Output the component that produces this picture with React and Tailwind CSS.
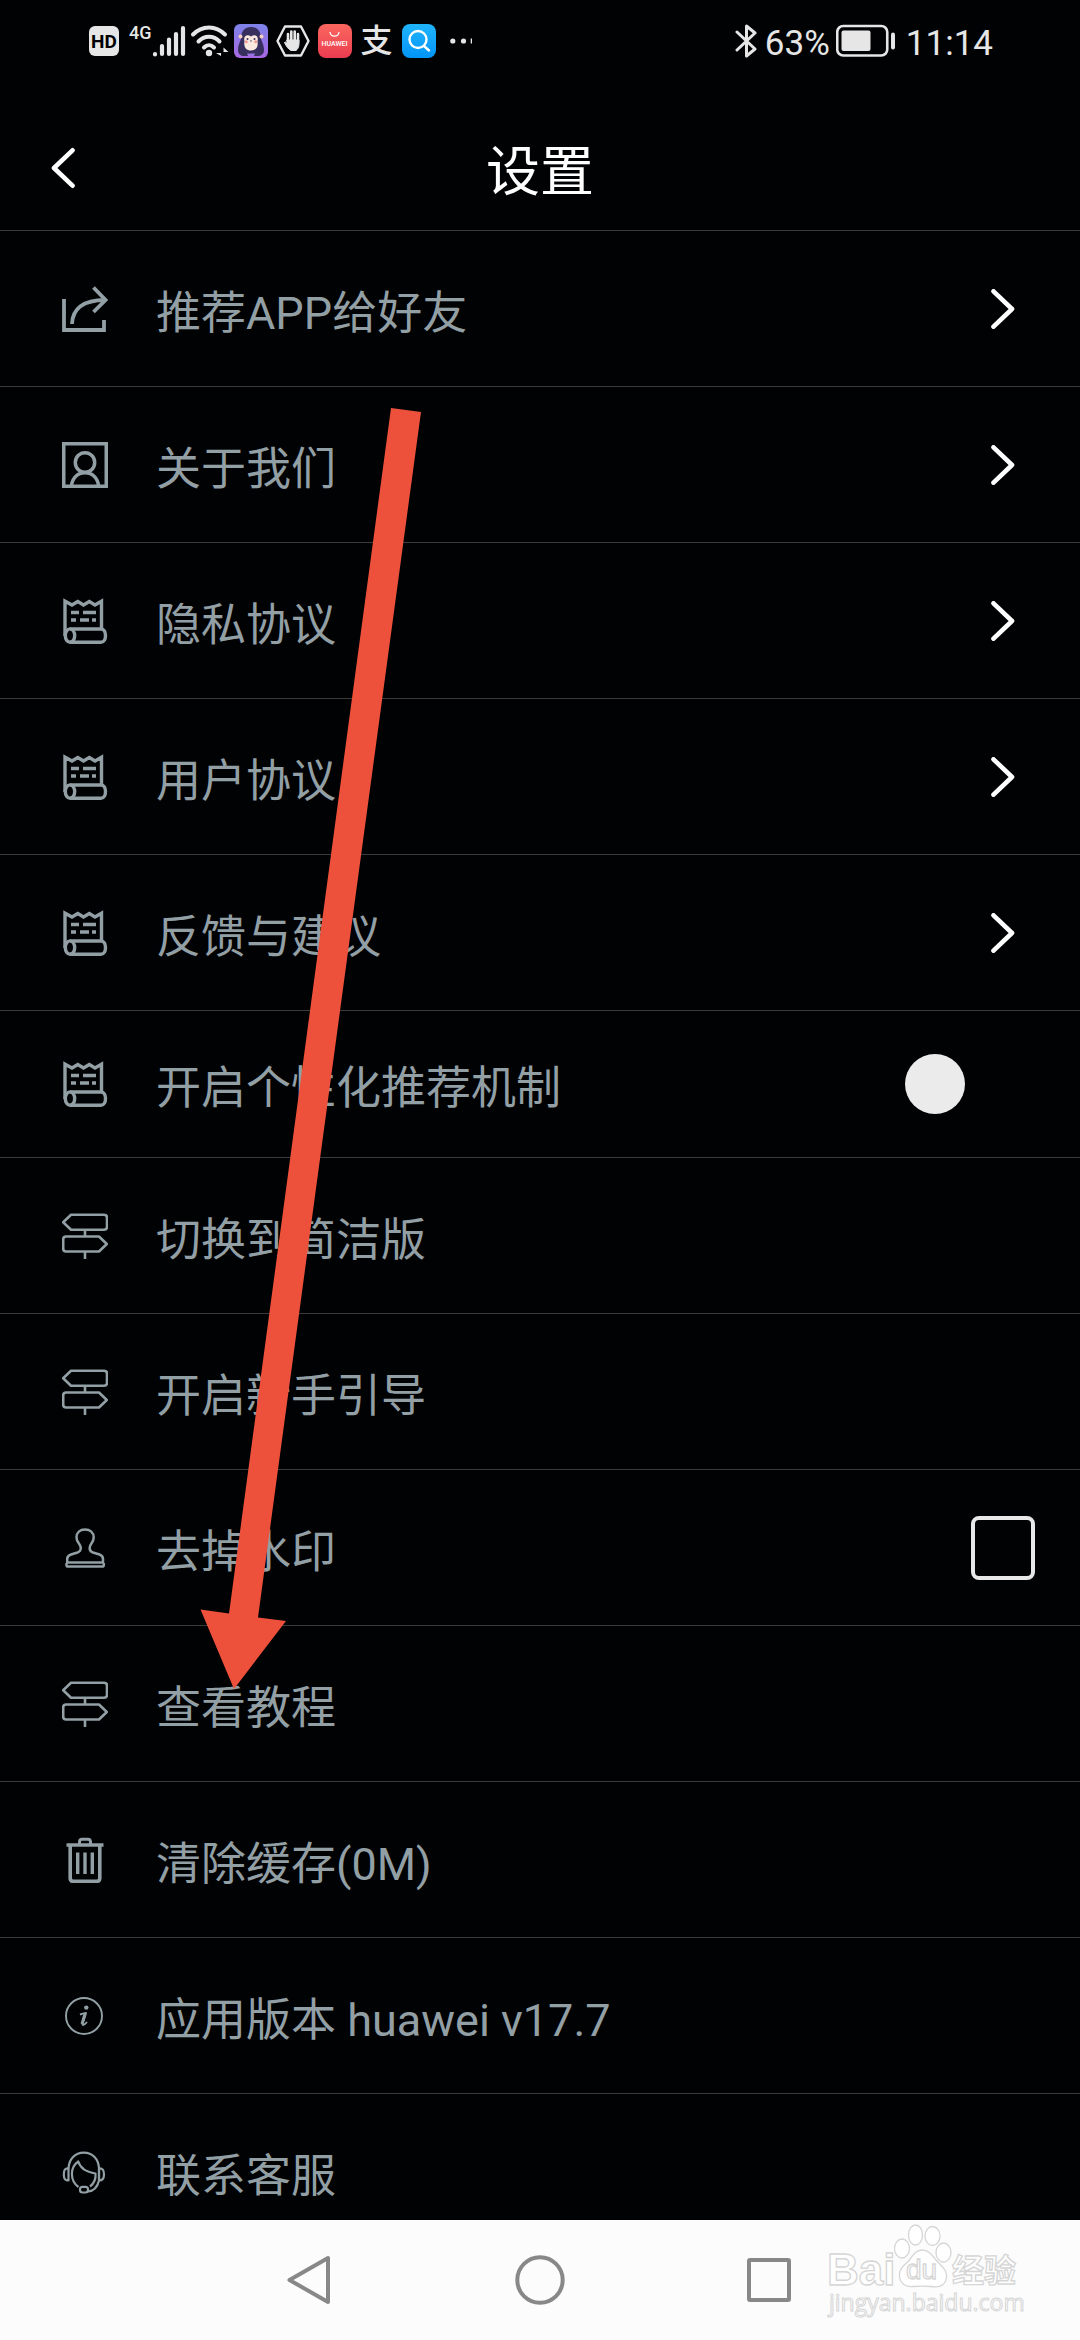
import React, { useState } from 'react';

const ShareIcon = () => (
    <svg className="size-[46px]" viewBox="0 0 46 46" fill="none" stroke="currentColor" strokeWidth={3.8}>
        <path d="M2 13V44H42V34" />
        <path d="M10 38C10.500 23 21 14 43 14" />
        <path d="M31.500 1.500L43.500 14L31.500 26" />
    </svg>
);

const UserIcon = () => (
    <svg className="size-[46px]" viewBox="0 0 46 46" fill="none" stroke="currentColor" strokeWidth={3.5}>
        <rect x="1.750" y="1.750" width="42.500" height="42.500" />
        <ellipse cx="23" cy="20.500" rx="9.700" ry="9.800" />
        <path d="M9.500 44C10 36 15.500 30.800 23 30.800S36 36 36.500 44" />
    </svg>
);

const ScrollIcon = () => (
    <svg className="size-[46px]" viewBox="0 0 46 46" fill="none" stroke="currentColor" strokeWidth={3.4}>
        <path d="M3 38V3.200L10 7L15.800 3.500L21.500 7L27.300 3.500L33 7L39.500 3.200V31" />
        <path d="M9 14.500H17M21 14.500H34M9 22H14M18 22H27M30 22H34" />
        <path d="M8 31H39C42 31 43.500 34 43.500 37.500S42 44.300 39 44.300H8" />
        <ellipse cx="8" cy="37.600" rx="4.700" ry="6.700" />
    </svg>
);

const SignpostIcon = () => (
    <svg className="size-[46px]" viewBox="0 0 46 46" fill="none" stroke="currentColor" strokeWidth={2.6} strokeLinejoin="round">
        <path d="M9 1.700H42C44 1.700 45 2.700 45 4.500V14C45 15.800 44 16.700 42 16.700H9L1.200 9.200Z" />
        <path d="M37 23.500H4C2 23.500 1.200 24.500 1.200 26.300V35.500C1.200 37.300 2 38.500 4 38.500H37L44.800 31Z" />
        <path d="M23 16.700V23.500M23 38.500V46" />
    </svg>
);

const StampIcon = () => (
    <svg className="size-[46px]" viewBox="0 0 46 46" fill="none" stroke="currentColor" strokeWidth={2.5}>
        <path d="M5.200 37.500V34C5.200 31.500 6.500 30.300 9 29.500L15.500 27.500C18.500 26.500 19 25 18.700 22.500C18.500 18.500 14.500 17.500 14.500 12.500C14.500 7.500 18 4.500 23 4.500S31.700 7.500 31.700 12.500C31.700 17.500 28 18.500 27.700 22.500C27.500 25 28 26.500 31 27.500L37.500 29.500C40 30.300 41 31.500 41 34V37.500Z" />
        <path d="M4.500 38V40C4.500 41 5.200 41.600 6.200 41.600H40C41 41.600 41.800 41 41.800 40V38" />
    </svg>
);

const TrashIcon = () => (
    <svg className="size-[46px]" viewBox="0 0 46 46" fill="none" stroke="currentColor" strokeWidth={3.6}>
        <path d="M4.500 8H41.500" />
        <path d="M17.500 7.500V5C17.500 3 18.500 2.200 20 2.200H26C27.500 2.200 28.500 3 28.500 5V7.500" strokeWidth={3} />
        <path d="M8.200 8V41C8.200 43.200 9.500 44.400 11.500 44.400H34.500C36.500 44.400 37.800 43.200 37.800 41V8" />
        <path d="M15.700 15.500V37M23 15.500V37M30.300 15.500V37" strokeWidth={3.4} />
    </svg>
);

const InfoIcon = () => (
    <svg className="size-[46px]" viewBox="0 0 46 46" fill="none" stroke="currentColor" strokeWidth={1.900}>
        <circle cx="22" cy="23" r="18" />
        <circle cx="24.300" cy="14.600" r="2.200" fill="currentColor" stroke="none" />
        <path d="M18 21.500C20 20.800 22 20.300 24 19.900L20.600 30.500C20 32.600 22 32.600 25 29" strokeLinejoin="round" />
        <path d="M23 21L20 31" strokeWidth={3} />
    </svg>
);

const SupportIcon = () => (
    <svg className="size-[46px]" viewBox="0 0 46 46" fill="none" stroke="currentColor" strokeWidth={2.2} strokeLinejoin="round">
        <path d="M6.500 19.500C7 10 13 3.700 21.800 3.700S36.600 10 37 19.500V31" />
        <path d="M6.500 19.500C3 19 1.800 21 1.800 25.500S3 31.500 6.500 31.500Z" />
        <path d="M37 19.500C40.500 19 42 21 42 25.500S40.500 31.500 37 31.500Z" />
        <path d="M16.500 38C8 32 7.500 18.500 16.300 12.500C18 18.500 24 23 33.500 24.500C34 30 32 34.500 28 37.500" />
        <path d="M37 31.500C35.500 38 31.500 42 26 42.500" />
        <rect x="18" y="37.800" width="8" height="5.700" rx="2.500" />
    </svg>
);

const Chevron = ({ back }) => (
    <svg
        className={back ? 'h-[42px] w-6 rotate-180' : 'h-10 w-6'}
        viewBox="0 0 24 40"
        fill="none"
        stroke="currentColor"
        strokeWidth={4.6}
        strokeLinecap="round"
        strokeLinejoin="round"
    >
        <path d="M2.500 2.300L21 20L2.500 37.700" />
    </svg>
);

const StatusBar = () => (
    <div className="flex h-[82px] shrink-0 items-center justify-between pl-[89px] pr-[87px] text-[#e6e6e6]">
        <div className="flex items-center">
            <span className="flex size-[30px] items-center justify-center rounded-md bg-[#e6e6e6] text-[19px] font-bold leading-none text-black">
                HD
            </span>
            <span className="ml-2.5 flex h-[34px] items-start text-[18px] font-medium leading-none">4G</span>
            <svg className="h-8 w-[34px]" viewBox="0 0 34 32" fill="none" stroke="currentColor" strokeWidth={4.2} strokeLinecap="round">
                <path d="M3 29V29.500M10 21V29M17 14.500V29M24 9V29M31 3V29" />
            </svg>
            <svg className="ml-1 h-8 w-10" viewBox="0 0 40 32" fill="none" stroke="currentColor" strokeWidth={4} strokeLinecap="round">
                <path d="M3 9.500C12 0 26 0 35 9.500M8.500 16.500C14.500 10.300 23.500 10.300 29.500 16.500M14 22.500C17 19.500 21 19.500 24 22.500" />
                <circle cx="19" cy="28" r="3.200" fill="currentColor" stroke="none" />
                <path d="M31 22.500V31L26 28H31ZM33.500 31V22.500L38.500 27H33.500Z" fill="currentColor" stroke="none" />
            </svg>
            <svg className="ml-1 size-[34px]" viewBox="0 0 34 34">
                <defs>
                    <linearGradient id="ape" x1="0" y1="0" x2="0" y2="1">
                        <stop offset="0" stopColor="#7c83ea" />
                        <stop offset="1" stopColor="#a867e2" />
                    </linearGradient>
                </defs>
                <rect width="34" height="34" rx="6" fill="url(#ape)" />
                <path d="M17 3C11 3 7.500 7 7.500 12C7.500 16 4 20 4 26C4 30 7 32 10 32H24C27 32 30 30 30 26C30 20 26.500 16 26.500 12C26.500 7 23 3 17 3Z" fill="#37305f" />
                <circle cx="6.500" cy="12.500" r="2" fill="#f3cdbd" />
                <circle cx="27.500" cy="12.500" r="2" fill="#f3cdbd" />
                <path d="M17 12.500C13 9.500 9 12.500 10.500 17C9.500 23 12 26.500 17 26.500S24.500 23 23.500 17C25 12.500 21 9.500 17 12.500Z" fill="#fbe9df" />
                <circle cx="13.500" cy="15" r="1" fill="#37305f" />
                <circle cx="20.500" cy="15" r="1" fill="#37305f" />
                <circle cx="12.300" cy="17.800" r="1.500" fill="#f39a91" />
                <circle cx="21.700" cy="17.800" r="1.500" fill="#f39a91" />
                <path d="M16 16.500H18L17 18Z" fill="#37305f" />
                <path d="M13 29.500H21L20 32H14Z" fill="#9a70e3" />
            </svg>
            <svg className="ml-2 size-[34px]" viewBox="0 0 34 34" fill="none" stroke="currentColor" strokeLinejoin="round" strokeLinecap="round">
                <path d="M9 2.500H25L32.500 17L25 31.500H9L1.500 17Z" strokeWidth={2.4} />
                <path d="M12 18V10M15.300 17V7.500M18.700 17V7.500M22 18V10" strokeWidth={2.6} />
                <path d="M11 16H23V20C23 23 21.500 25.500 20 26.500H15C12.500 25.500 10 22 8.500 18.500C9.500 17.500 10.500 18.500 11.500 20Z" fill="currentColor" strokeWidth={1} />
            </svg>
            <span className="ml-2 flex size-[34px] flex-col items-center justify-end gap-1 rounded-lg bg-linear-to-b from-[#fa665f] to-[#ea3b50] pb-2.5 text-white">
                <svg className="h-[5px] w-[11px]" viewBox="0 0 11 5" fill="none" stroke="currentColor" strokeWidth={1.200}>
                    <path d="M1 0C1.500 5.500 9.500 5.500 10 0" />
                </svg>
                <span className="text-[7px] font-medium leading-none">HUAWEI</span>
            </span>
            <span className="ml-2 w-[34px] text-center text-[32px] font-medium leading-none">支</span>
            <span className="ml-2 flex size-[34px] items-center justify-center rounded-lg bg-linear-to-b from-[#20b4fb] to-[#0295f8] text-white">
                <svg className="size-6" viewBox="0 0 24 24" fill="none" stroke="currentColor" strokeWidth={2.4} strokeLinecap="round">
                    <circle cx="11" cy="10.500" r="8.500" />
                    <path d="M17 17L22 21.500" />
                </svg>
            </span>
            <svg className="ml-3.5 h-2 w-6" viewBox="0 0 24 8" fill="currentColor">
                <circle cx="2.800" cy="4" r="2.600" />
                <circle cx="13.500" cy="4" r="2.600" />
                <path d="M22 1.600H20.700V6.400H22Z" />
            </svg>
        </div>
        <div className="flex items-center text-[35px] leading-none">
            <svg className="h-[34px] w-[22px]" viewBox="0 0 22 34" fill="none" stroke="currentColor" strokeWidth={3} strokeLinejoin="round" strokeLinecap="round">
                <path d="M2 8L20 25L11.500 32V2L20 9L2 26" />
            </svg>
            <span className="ml-2 pt-1">63%</span>
            <svg className="ml-1.5 h-[34px] w-[60px]" viewBox="0 0 60 34">
                <rect x="1.250" y="2" width="50" height="29.500" rx="6" fill="none" stroke="currentColor" strokeWidth={2.600} />
                <rect x="5.500" y="6.500" width="29" height="20.500" rx="2" fill="currentColor" />
                <rect x="55" y="8.500" width="4" height="17" rx="2" fill="currentColor" />
            </svg>
            <span className="ml-2.5 pt-1">11:14</span>
        </div>
    </div>
);

const items = [
    { icon: ShareIcon, label: '推荐APP给好友', type: 'link' },
    { icon: UserIcon, label: '关于我们', type: 'link' },
    { icon: ScrollIcon, label: '隐私协议', type: 'link' },
    { icon: ScrollIcon, label: '用户协议', type: 'link' },
    { icon: ScrollIcon, label: '反馈与建议', type: 'link' },
    { icon: ScrollIcon, label: '开启个性化推荐机制', type: 'switch' },
    { icon: SignpostIcon, label: '切换到简洁版', type: 'action' },
    { icon: SignpostIcon, label: '开启新手引导', type: 'action' },
    { icon: StampIcon, label: '去掉水印', type: 'checkbox' },
    { icon: SignpostIcon, label: '查看教程', type: 'action' },
    { icon: TrashIcon, label: '清除缓存(0M)', type: 'action' },
    { icon: InfoIcon, label: '应用版本 huawei v17.7', type: 'action' },
    { icon: SupportIcon, label: '联系客服', type: 'action' }
];

const rowBase = 'flex w-full items-center gap-12 pl-[62px] pr-[45px] text-left';

const SettingRow = ({ item }) => {
    const [checked, setChecked] = useState(false);
    const Icon = item.icon;
    const content = (
        <>
            <Icon />
            <span className="flex-1 pt-2.5 text-[45px] leading-[60px]">{item.label}</span>
        </>
    );

    if (item.type === 'switch') {
        return (
            <label className={`${rowBase} h-[146px]`}>
                {content}
                <input
                    type="checkbox"
                    role="switch"
                    checked={checked}
                    onChange={(e) => setChecked(e.target.checked)}
                    className="h-[60px] w-[130px] appearance-none rounded-full before:block before:size-[60px] before:rounded-full before:bg-[#ebebeb] checked:before:ml-[70px]"
                />
            </label>
        );
    }

    if (item.type === 'checkbox') {
        return (
            <label className={`${rowBase} h-[155px]`}>
                {content}
                <input
                    type="checkbox"
                    checked={checked}
                    onChange={(e) => setChecked(e.target.checked)}
                    className="size-16 appearance-none rounded-lg border-4 border-[#e8e8e8] checked:bg-[#e8e8e8]"
                />
            </label>
        );
    }

    if (item.type === 'link') {
        return (
            <a href="#" className={`${rowBase} h-[155px]`}>
                {content}
                <span className="flex w-16 justify-center text-white">
                    <Chevron />
                </span>
            </a>
        );
    }

    return (
        <button type="button" className={`${rowBase} h-[155px]`}>
            {content}
        </button>
    );
};

const Watermark = () => (
    <svg className="pointer-events-none absolute right-[45px] bottom-[18px] h-[100px] w-[210px]" viewBox="0 0 210 100" fill="#fff" stroke="#d6d6d6" strokeWidth={1.300}>
        <text x="2" y="63" fontSize="44" fontWeight="700" fontFamily="Liberation Sans, Arial, sans-serif">Bai</text>
        <ellipse cx="77" cy="26.500" rx="7.500" ry="9.500" />
        <ellipse cx="90.500" cy="13" rx="7" ry="10" />
        <ellipse cx="107.500" cy="14" rx="7.500" ry="9.500" />
        <ellipse cx="118.500" cy="30.500" rx="7.500" ry="9.500" />
        <path d="M97 28C91 28 88 33 84.500 38C80 43 74 46 74.500 54C75 62 81 65 88 64.500C94 64 100 64 106 64.500C114 66 121 63 121.500 55C122 47 116 44 111 38C107.500 34 104 28 97 28Z" />
        <text x="81" y="57" fontSize="28" fontFamily="Liberation Sans, Arial, sans-serif">du</text>
        <text x="127" y="60" fontSize="32" fontWeight="700" fontFamily="Noto Sans CJK SC, sans-serif">经验</text>
        <text x="4" y="89" fontSize="23" fontFamily="Open Sans, Noto Sans, sans-serif" strokeWidth={1}>jingyan.baidu.com</text>
    </svg>
);

const NavBar = () => (
    <nav className="relative flex h-[120px] shrink-0 items-center justify-center gap-[180px] bg-[#fcfcfc] text-[#888]">
        <button type="button" aria-label="Back">
            <svg className="size-[50px]" viewBox="0 0 50 50" fill="none" stroke="currentColor" strokeWidth={4} strokeLinejoin="round">
                <path d="M43 3V47L4.500 25Z" />
            </svg>
        </button>
        <button type="button" aria-label="Home">
            <svg className="size-[50px]" viewBox="0 0 50 50" fill="none" stroke="currentColor" strokeWidth={4}>
                <circle cx="25" cy="25" r="22.700" />
            </svg>
        </button>
        <button type="button" aria-label="Recent">
            <svg className="size-[50px]" viewBox="0 0 50 50" fill="none" stroke="currentColor" strokeWidth={4} strokeLinejoin="round">
                <rect x="4" y="5" width="40" height="40" rx="1" />
            </svg>
        </button>
        <Watermark />
    </nav>
);

const App = () => {
    return (
        <div className="relative flex h-screen flex-col overflow-hidden bg-[#010203] font-[Roboto,'Noto_Sans_CJK_SC',sans-serif] text-[#929fa5]">
            <StatusBar />
            <header className="flex h-[149px] shrink-0 items-center border-b border-[#3b3b3d] px-[51px] pt-6 text-white">
                <button type="button" aria-label="返回">
                    <Chevron back />
                </button>
                <h1 className="flex-1 pr-6 pt-2.5 text-center text-[54px] leading-[72px]">设置</h1>
            </header>
            <ul className="min-h-0 flex-1 overflow-hidden">
                {items.map((item) => (
                    <li key={item.label} className="border-b border-[#3b3b3d]">
                        <SettingRow item={item} />
                    </li>
                ))}
            </ul>
            <NavBar />
            <svg className="pointer-events-none absolute left-[200px] top-[407px] h-[1283px] w-[222px]" viewBox="0 0 222 1283">
                <path d="M191 1L221 5L58 1210.500L86 1214L34 1282L0.500 1202.500L29 1206.500Z" fill="#ee513b" />
            </svg>
        </div>
    );
};

export default App;
